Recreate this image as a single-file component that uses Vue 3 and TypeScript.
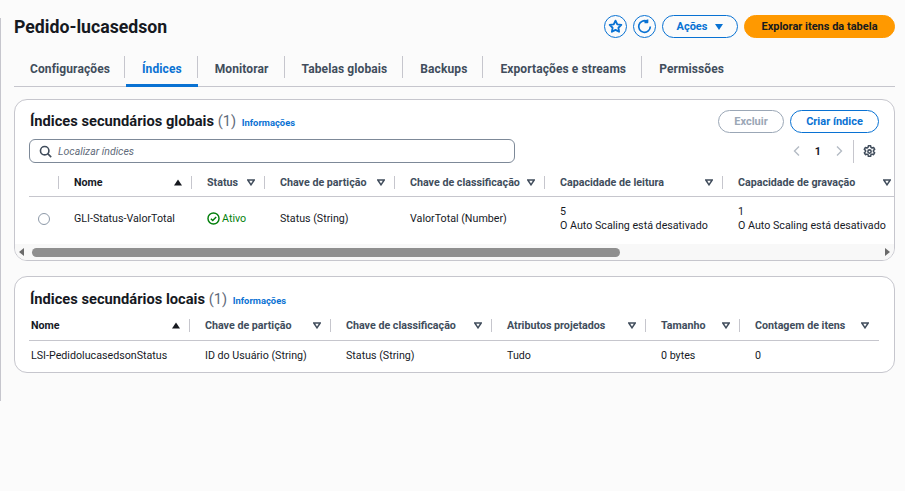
<script setup lang="ts">
const tabs = ['Configurações', 'Índices', 'Monitorar', 'Tabelas globais', 'Backups', 'Exportações e streams', 'Permissões']

const globalCols = [
  { label: 'Nome', sort: 'asc' },
  { label: 'Status', sort: 'none' },
  { label: 'Chave de partição', sort: 'none' },
  { label: 'Chave de classificação', sort: 'none' },
  { label: 'Capacidade de leitura', sort: 'none' },
  { label: 'Capacidade de gravação', sort: 'none' },
]

const localCols = [
  { label: 'Nome', sort: 'asc' },
  { label: 'Chave de partição', sort: 'none' },
  { label: 'Chave de classificação', sort: 'none' },
  { label: 'Atributos projetados', sort: 'none' },
  { label: 'Tamanho', sort: 'none' },
  { label: 'Contagem de itens', sort: 'none' },
]

const localRow = ['LSI-PedidolucasedsonStatus', 'ID do Usuário (String)', 'Status (String)', 'Tudo', '0 bytes', '0']
</script>

<template>
  <div class="page">
    <header class="top">
      <h1>Pedido-lucasedson</h1>
      <div class="actions">
        <button class="round">
          <svg width="15" height="15" viewBox="0 0 16 16"><path d="M8 1.8l1.9 3.9 4.3.6-3.1 3 .7 4.3L8 11.6l-3.8 2 .7-4.3-3.1-3 4.3-.6z" fill="none" stroke="#0972d3" stroke-width="2" stroke-linejoin="round"/></svg>
        </button>
        <button class="round">
          <svg width="15" height="15" viewBox="0 0 16 16"><path d="M14.2 8A6.2 6.2 0 1 1 10.8 2.5M11.2 0.4v3.1H8" fill="none" stroke="#0972d3" stroke-width="1.8" stroke-linejoin="round"/></svg>
        </button>
        <button class="btn acoes">Ações <span class="caret"></span></button>
        <button class="btn primary">Explorar itens da tabela</button>
      </div>
    </header>

    <nav class="tabs">
      <div v-for="t in tabs" :key="t" class="tab" :class="{ active: t === 'Índices' }"><span>{{ t }}</span></div>
    </nav>

    <section class="card first">
      <div class="card-head">
        <h2>Índices secundários globais <span class="count">(1)</span> <a class="info">Informações</a></h2>
        <div class="head-btns">
          <button class="btn off">Excluir</button>
          <button class="btn create">Criar índice</button>
        </div>
      </div>
      <div class="tools">
        <div class="search">
          <svg width="13" height="13" viewBox="0 0 16 16"><circle cx="7" cy="7" r="5.2" fill="none" stroke="#414d5c" stroke-width="2"/><path d="M10.7 10.7L15 15" stroke="#414d5c" stroke-width="2"/></svg>
          <span>Localizar índices</span>
        </div>
        <div class="pager">
          <svg width="12" height="12" viewBox="0 0 12 12"><path d="M8 1.5L3.5 6 8 10.5" fill="none" stroke="#b4bbc4" stroke-width="1.4"/></svg>
          <b>1</b>
          <svg width="12" height="12" viewBox="0 0 12 12"><path d="M4 1.5L8.5 6 4 10.5" fill="none" stroke="#b4bbc4" stroke-width="1.4"/></svg>
          <i class="sep"></i>
          <svg class="gear" width="13" height="13" viewBox="0 0 16 16"><path d="M6.6 1h2.8l.4 2 1.3.7 1.9-.7 1.4 2.4-1.5 1.3v1.5l1.5 1.3-1.4 2.4-1.9-.7-1.3.7-.4 2H6.6l-.4-2-1.3-.7-1.9.7-1.4-2.4 1.5-1.3V6.7L1.6 5.4 3 3l1.9.7 1.3-.7z" fill="none" stroke="#414d5c" stroke-width="1.9" stroke-linejoin="round"/><circle cx="8" cy="8" r="2" fill="none" stroke="#414d5c" stroke-width="1.9"/></svg>
        </div>
      </div>

      <div class="scroller">
        <div class="grid global head">
          <div class="th blank"></div>
          <div v-for="c in globalCols" :key="c.label" class="th">
            <span>{{ c.label }}</span>
            <svg width="8" height="7" viewBox="0 0 8 7">
              <path v-if="c.sort === 'asc'" d="M4 0.5L8 6.5H0z" fill="#16191f"/>
              <path v-else d="M0.8 1h6.4L4 5.8z" fill="none" stroke="#414d5c" stroke-width="1.5"/>
            </svg>
          </div>
        </div>
        <div class="grid global row">
          <div class="td radio-cell"><span class="radio"></span></div>
          <div class="td">GLI-Status-ValorTotal</div>
          <div class="td ok">
            <svg width="13" height="13" viewBox="0 0 16 16"><circle cx="8" cy="8" r="6.8" fill="none" stroke="#037f0c" stroke-width="1.8"/><path d="M4.8 8.2l2.3 2.3 4.2-4.4" fill="none" stroke="#037f0c" stroke-width="1.8"/></svg>
            Ativo
          </div>
          <div class="td">Status (String)</div>
          <div class="td">ValorTotal (Number)</div>
          <div class="td">5<br>O Auto Scaling está desativado</div>
          <div class="td">1<br>O Auto Scaling está desativado</div>
        </div>
      </div>

      <div class="hscroll">
        <i class="arrow left"></i>
        <div class="thumb"></div>
        <i class="arrow right"></i>
      </div>
    </section>

    <section class="card second">
      <h2>Índices secundários locais <span class="count">(1)</span> <a class="info">Informações</a></h2>
      <div class="grid local head">
        <div v-for="c in localCols" :key="c.label" class="th">
          <span>{{ c.label }}</span>
          <svg width="8" height="7" viewBox="0 0 8 7">
            <path v-if="c.sort === 'asc'" d="M4 0.5L8 6.5H0z" fill="#16191f"/>
            <path v-else d="M0.8 1h6.4L4 5.8z" fill="none" stroke="#414d5c" stroke-width="1.5"/>
          </svg>
        </div>
      </div>
      <div class="grid local row">
        <div v-for="v in localRow" :key="v" class="td">{{ v }}</div>
      </div>
    </section>
  </div>
</template>

<style>
html, body {
  margin: 0;
  background: #fbfbfb;
}
</style>

<style scoped>
.page {
  box-sizing: border-box;
  width: 905px;
  height: 491px;
  overflow: hidden;
  padding: 15px 10px 0 14px;
  font-family: Roboto, sans-serif;
  font-size: 10.7px;
  color: #16191f;
  position: relative;
}

.page::before {
  content: "";
  position: absolute;
  left: 0;
  top: 18px;
  height: 383px;
  width: 1px;
  background: #c6c6cd;
}

.top {
  display: flex;
  justify-content: space-between;
  align-items: center;
  height: 23px;
}

h1 {
  margin: 0;
  font-size: 17.7px;
  font-weight: 700;
}

.actions {
  display: flex;
  gap: 6px;
  align-items: center;
}

button {
  font-family: inherit;
  padding: 0;
  background: #fff;
  cursor: pointer;
  white-space: nowrap;
}

.round {
  box-sizing: border-box;
  width: 23px;
  height: 23px;
  border: 1px solid #0972d3;
  border-radius: 50%;
  display: flex;
  align-items: center;
  justify-content: center;
  background: transparent;
}

.btn {
  box-sizing: border-box;
  height: 23px;
  border: 1px solid #0972d3;
  border-radius: 12px;
  color: #0972d3;
  font-weight: 700;
  font-size: 11px;
}

.acoes {
  width: 76px;
  display: flex;
  align-items: center;
  justify-content: center;
  gap: 8px;
  background: transparent;
}

.caret {
  width: 0;
  height: 0;
  border-left: 4px solid transparent;
  border-right: 4px solid transparent;
  border-top: 6px solid #0972d3;
}

.primary {
  width: 151px;
  background: #ff9900;
  border-color: #ff9900;
  color: #16191f;
}

.tabs {
  display: flex;
  height: 32px;
  margin-top: 16px;
  border-bottom: 1px solid #c6c6cd;
}

.tab {
  position: relative;
  display: flex;
  align-items: center;
  height: 31px;
  font-weight: 700;
  font-size: 12px;
  letter-spacing: 0.1px;
  color: #414d5c;
  padding: 0 16px 2px 17px;
  box-sizing: border-box;
  white-space: nowrap;
}

.tab:first-child {
  padding: 0 15px 2px 16px;
}

.tab:not(:last-child)::after {
  content: "";
  position: absolute;
  right: 0;
  top: 2px;
  height: 22px;
  width: 1px;
  background: #c6c6cd;
}

.tab.active {
  color: #0972d3;
}

.tab.active::before {
  content: "";
  position: absolute;
  left: 1px;
  right: 0;
  bottom: -2px;
  height: 3px;
  background: #0972d3;
}

.card {
  margin-top: 12px;
  background: #fff;
  border: 1px solid #c6c6cd;
  border-radius: 13px;
  overflow: hidden;
}

.first {
  height: 162px;
  box-sizing: border-box;
  display: flex;
  flex-direction: column;
  padding: 9px 0 0;
}

.card-head {
  display: flex;
  justify-content: space-between;
  align-items: center;
  height: 24px;
  padding: 0 15px;
}

.card-head h2 {
  margin-top: 2px;
}

h2 {
  margin: 0;
  font-size: 14.7px;
  font-weight: 700;
  line-height: 24px;
  white-space: nowrap;
}

.count {
  font-weight: 400;
  color: #5f6b7a;
}

.info {
  font-size: 9.4px;
  font-weight: 700;
  color: #0972d3;
  margin-left: 2px;
}

.head-btns {
  display: flex;
  gap: 6px;
}

.off {
  width: 66px;
  border-color: #9ba7b6;
  color: #9ba7b6;
}

.create {
  width: 89px;
}

.tools {
  display: flex;
  justify-content: space-between;
  align-items: center;
  margin-top: 6px;
  padding: 0 15px 0 14px;
}

.search {
  box-sizing: border-box;
  width: 486px;
  height: 24px;
  border: 1px solid #7d8998;
  border-radius: 6px;
  display: flex;
  align-items: center;
  gap: 6px;
  padding-left: 9px;
  font-style: italic;
  font-size: 10.5px;
  color: #5f6b7a;
}

.pager {
  display: flex;
  align-items: center;
  gap: 12px;
  color: #16191f;
}

.sep {
  width: 1px;
  height: 23px;
  background: #c6c6cd;
  margin: 0 -3px 0 -4px;
}

.gear {
  margin-right: 3px;
}

.scroller {
  overflow: hidden;
  padding-left: 14px;
}

.grid {
  display: grid;
  width: max-content;
}

.global {
  grid-template-columns: 30px 133px 73px 130px 150px 178px 178px;
}

.local {
  grid-template-columns: 161px 141px 161px 154px 94px 139px;
  margin-left: 14px;
}

.head {
  border-bottom: 1px solid #c6c6cd;
  box-sizing: border-box;
}

.global.head {
  height: 29px;
  margin-top: 5px;
}

.th {
  position: relative;
  display: flex;
  align-items: center;
  justify-content: space-between;
  font-weight: 700;
  color: #414d5c;
  padding: 0 10px 0 15px;
  white-space: nowrap;
}

.global .th:nth-child(2) span,
.local .th:nth-child(1) span {
  color: #16191f;
}

.th:not(:last-child)::after {
  content: "";
  position: absolute;
  right: 0;
  top: 8px;
  height: 13px;
  width: 1px;
  background: #c6c6cd;
}

.local .th {
  padding-bottom: 3px;
}

.local .th:not(:last-child)::after {
  top: 6px;
}

.local .th:first-child {
  padding-left: 2px;
}

.global.row {
  height: 47px;
  align-items: center;
  padding-bottom: 4px;
  box-sizing: border-box;
}

.td {
  padding-left: 15px;
  line-height: 14px;
  white-space: nowrap;
}

.radio-cell {
  padding-left: 9px;
}

.radio {
  display: block;
  width: 10px;
  height: 10px;
  border: 1px solid #8d99a8;
  border-radius: 50%;
}

.ok {
  color: #037f0c;
  display: flex;
  align-items: center;
  gap: 2px;
}

.hscroll {
  position: relative;
  margin-top: auto;
  height: 16px;
  background: #f8f8f8;
}

.thumb {
  position: absolute;
  left: 17px;
  top: 4px;
  width: 588px;
  height: 9px;
  border-radius: 5px;
  background: #8f8f8f;
}

.arrow {
  position: absolute;
  top: 4px;
  width: 0;
  height: 0;
  border-top: 4px solid transparent;
  border-bottom: 4px solid transparent;
}

.arrow.left {
  left: 4px;
  border-right: 5px solid #6a6a6a;
}

.arrow.right {
  right: 4px;
  border-left: 5px solid #6a6a6a;
}

.second {
  margin-top: 15px;
  height: 97px;
  box-sizing: border-box;
  padding-top: 9px;
}

.second h2 {
  padding: 1px 0 0 15px;
  height: 24px;
  box-sizing: border-box;
}

.local.head {
  height: 28px;
  margin-top: 3px;
}

.local.row {
  height: 30px;
  align-items: center;
}

.local .td:first-child {
  padding-left: 2px;
}
</style>
